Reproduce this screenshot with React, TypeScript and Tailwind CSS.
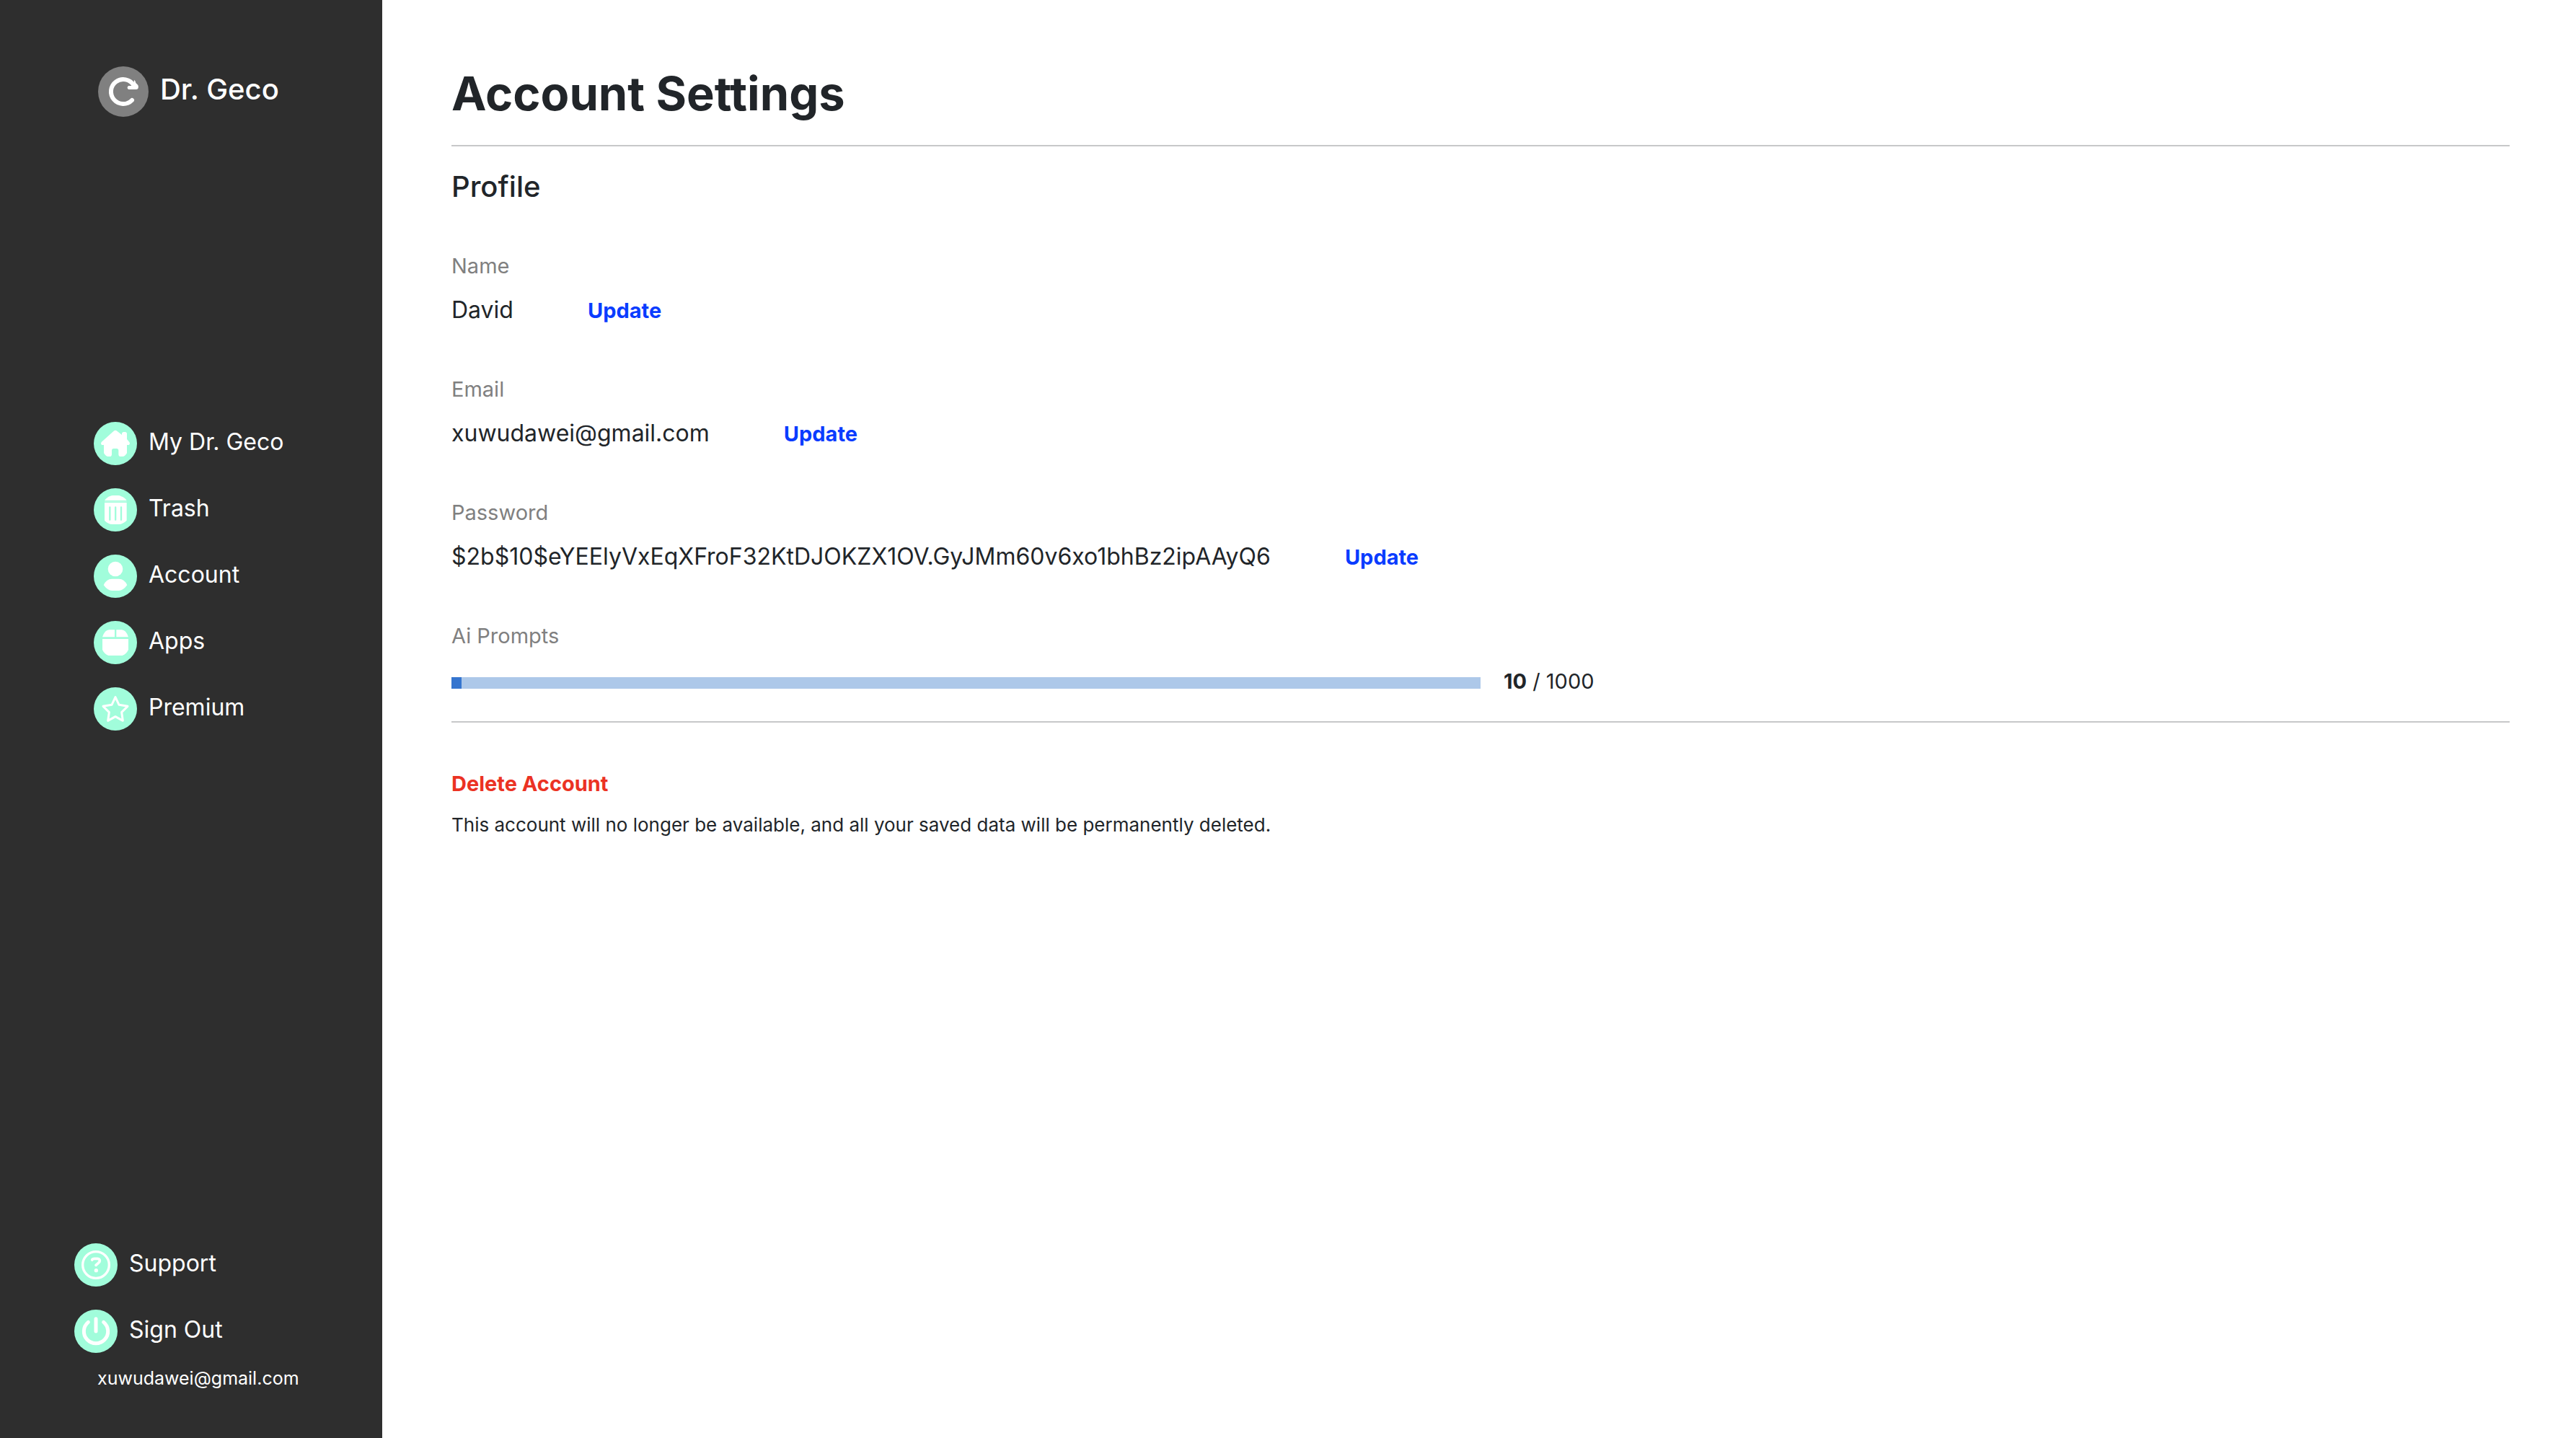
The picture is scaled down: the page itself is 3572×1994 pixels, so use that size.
import type { ReactNode } from "react";

type LinkItem = { label: string; art: ReactNode };

const navItems: LinkItem[] = [
  {
    label: "My Dr. Geco",
    art: (
      <>
        <path
          fill="#fff"
          d="M83 38Q90 32 97 38L117 54V50Q117 42 125 42H130Q138 42 138 50V72L148 84Q153 90 147 96H138V130Q130 144 120 144H112Q103 144 103 134V119Q103 111 95 111H83Q75 111 75 119V134Q75 144 66 144H60Q50 144 42 130V96H33Q27 90 32 84Z"
        />
      </>
    ),
  },
  {
    label: "Trash",
    art: (
      <>
        <path fill="#fff" d="M45 51Q55 37 68 33Q74 30 80 30H102Q108 30 114 34Q127 37 137 51Z" />
        <path stroke="#fff" strokeWidth="3" strokeOpacity="0.4" d="M45 55.500H137" />
        <path fill="#fff" d="M45 60H137V134Q122 149 104 150H78Q58 149 45 134Z" />
        <path stroke="#a1fddb" strokeWidth="7" strokeLinecap="round" d="M67 79V131M90.500 79V131M114 79V131" />
      </>
    ),
  },
  {
    label: "Account",
    art: (
      <>
        <circle cx="90" cy="60" r="31" fill="#fff" />
        <path fill="#fff" d="M41 127Q52 101 76 101H104Q128 101 139 127Q122 150 104 150H76Q58 150 41 127Z" />
      </>
    ),
  },
  {
    label: "Apps",
    art: (
      <>
        <path fill="#fff" d="M36 67Q46 37 64 37H87V67ZM94 37H116Q134 37 144 67H94Z" />
        <path fill="#fff" d="M36 75H144V120Q136 138 119 144H61Q44 138 36 120Z" />
      </>
    ),
  },
  {
    label: "Premium",
    art: (
      <path
        fill="none"
        stroke="#fff"
        strokeWidth="9"
        strokeLinejoin="round"
        d="M90 41L105 73L141 79L116 104L121 139L90 122L59 139L64 104L39 79L75 73Z"
      />
    ),
  },
];

const footerItems: LinkItem[] = [
  {
    label: "Support",
    art: (
      <>
        <circle cx="90" cy="90" r="55" fill="none" stroke="#fff" strokeWidth="10" />
        <path
          fill="none"
          stroke="#fff"
          strokeWidth="11"
          strokeLinecap="round"
          d="M74 69Q76 64 84 64H97Q106 65 106 73Q106 78 100 82L90 91"
        />
        <circle cx="91" cy="113" r="8" fill="#fff" />
      </>
    ),
  },
  {
    label: "Sign Out",
    art: (
      <path
        fill="none"
        stroke="#fff"
        strokeWidth="15"
        strokeLinecap="round"
        d="M90 38V90M58 52A50 50 0 1 0 122 52"
      />
    ),
  },
];

const fields = [
  { label: "Name", value: "David" },
  { label: "Email", value: "xuwudawei@gmail.com" },
  { label: "Password", value: "$2b$10$eYEElyVxEqXFroF32KtDJOKZX1OV.GyJMm60v6xo1bhBz2ipAAyQ6" },
];

const prompts = { used: 10, limit: 1000 };

function SidebarLink({ label, art }: LinkItem) {
  return (
    <a href="#" className="flex items-start gap-4 text-[32px] leading-[56px] text-white">
      <svg viewBox="0 0 180 180" className="size-[60px] shrink-0" aria-hidden="true">
        <circle cx="90" cy="90" r="90" fill="#a1fddb" />
        {art}
      </svg>
      {label}
    </a>
  );
}

function Sidebar() {
  return (
    <aside className="flex w-[530px] shrink-0 flex-col bg-[#2e2e2e] pt-[92px] pb-16 text-white">
      <a href="#" className="ml-[136px] flex items-start gap-4 text-[40px] leading-[64px] font-medium">
        <svg viewBox="0 0 210 210" className="size-[70px] shrink-0" aria-hidden="true">
          <circle cx="105" cy="105" r="105" fill="#808080" />
          <path
            fill="none"
            stroke="#fff"
            strokeWidth="18"
            strokeLinecap="round"
            d="M141 141A51 51 0 1 1 148 78"
          />
          <path fill="#fff" d="M150 56L155 62L157 69L166 78Q169 84 167 91Q165 96 159 96H127A8 8 0 0 1 127 81H138L149 70Z" />
        </svg>
        Dr. Geco
      </a>
      <nav className="mt-[423px] ml-[130px] flex flex-col gap-8">
        {navItems.map((item) => (
          <SidebarLink key={item.label} {...item} />
        ))}
      </nav>
      <div className="mt-auto">
        <div className="ml-[103px] flex flex-col gap-8">
          {footerItems.map((item) => (
            <SidebarLink key={item.label} {...item} />
          ))}
        </div>
        <p className="mt-4 ml-[135px] text-[25px] leading-[38px]">xuwudawei@gmail.com</p>
      </div>
    </aside>
  );
}

export default function App() {
  return (
    <div className="flex min-h-screen bg-white font-['Inter',sans-serif] text-[#212529]">
      <Sidebar />
      <main className="min-w-0 grow pt-[90px] pr-[92px] pl-24">
        <h1 className="text-[65px] leading-[80px] font-bold">Account Settings</h1>
        <hr className="mt-[31px] border-t-2 border-[#c7c8c9]" />
        <h2 className="mt-8 text-[40px] leading-[48px] font-medium">Profile</h2>

        <dl className="mt-[65px] flex flex-col gap-16">
          {fields.map((field) => (
            <div key={field.label}>
              <dt className="text-[29px] leading-[42px] text-[#808080]">{field.label}</dt>
              <dd className="mt-[15px] flex items-baseline gap-[103px] text-[32px] leading-[50px]">
                <span>{field.value}</span>
                <button type="button" className="text-[29px] leading-[42px] font-bold text-[#0a3cff]">
                  Update
                </button>
              </dd>
            </div>
          ))}
        </dl>

        <section className="mt-16">
          <h3 id="prompts-label" className="text-[29px] leading-[42px] text-[#808080]">
            Ai Prompts
          </h3>
          <div className="mt-[21px] flex items-start gap-8 text-[29px] leading-[42px]">
            <div
              role="progressbar"
              aria-labelledby="prompts-label"
              aria-valuenow={prompts.used}
              aria-valuemax={prompts.limit}
              className="mt-[15px] h-4 w-1/2 bg-[#adc8e9]"
            >
              <div
                className="h-full bg-[#3575cf]"
                style={{ width: `${(prompts.used / prompts.limit) * 100}%` }}
              />
            </div>
            <p>
              <strong className="font-bold">{prompts.used}</strong> / {prompts.limit}
            </p>
          </div>
        </section>

        <hr className="mt-[34px] border-t-2 border-[#c7c8c9]" />

        <button type="button" className="mt-16 block text-[29px] leading-[42px] font-bold text-[#eb3223]">
          Delete Account
        </button>
        <p className="mt-[17px] text-[26px] leading-[38px]">
          This account will no longer be available, and all your saved data will be permanently deleted.
        </p>
      </main>
    </div>
  );
}
